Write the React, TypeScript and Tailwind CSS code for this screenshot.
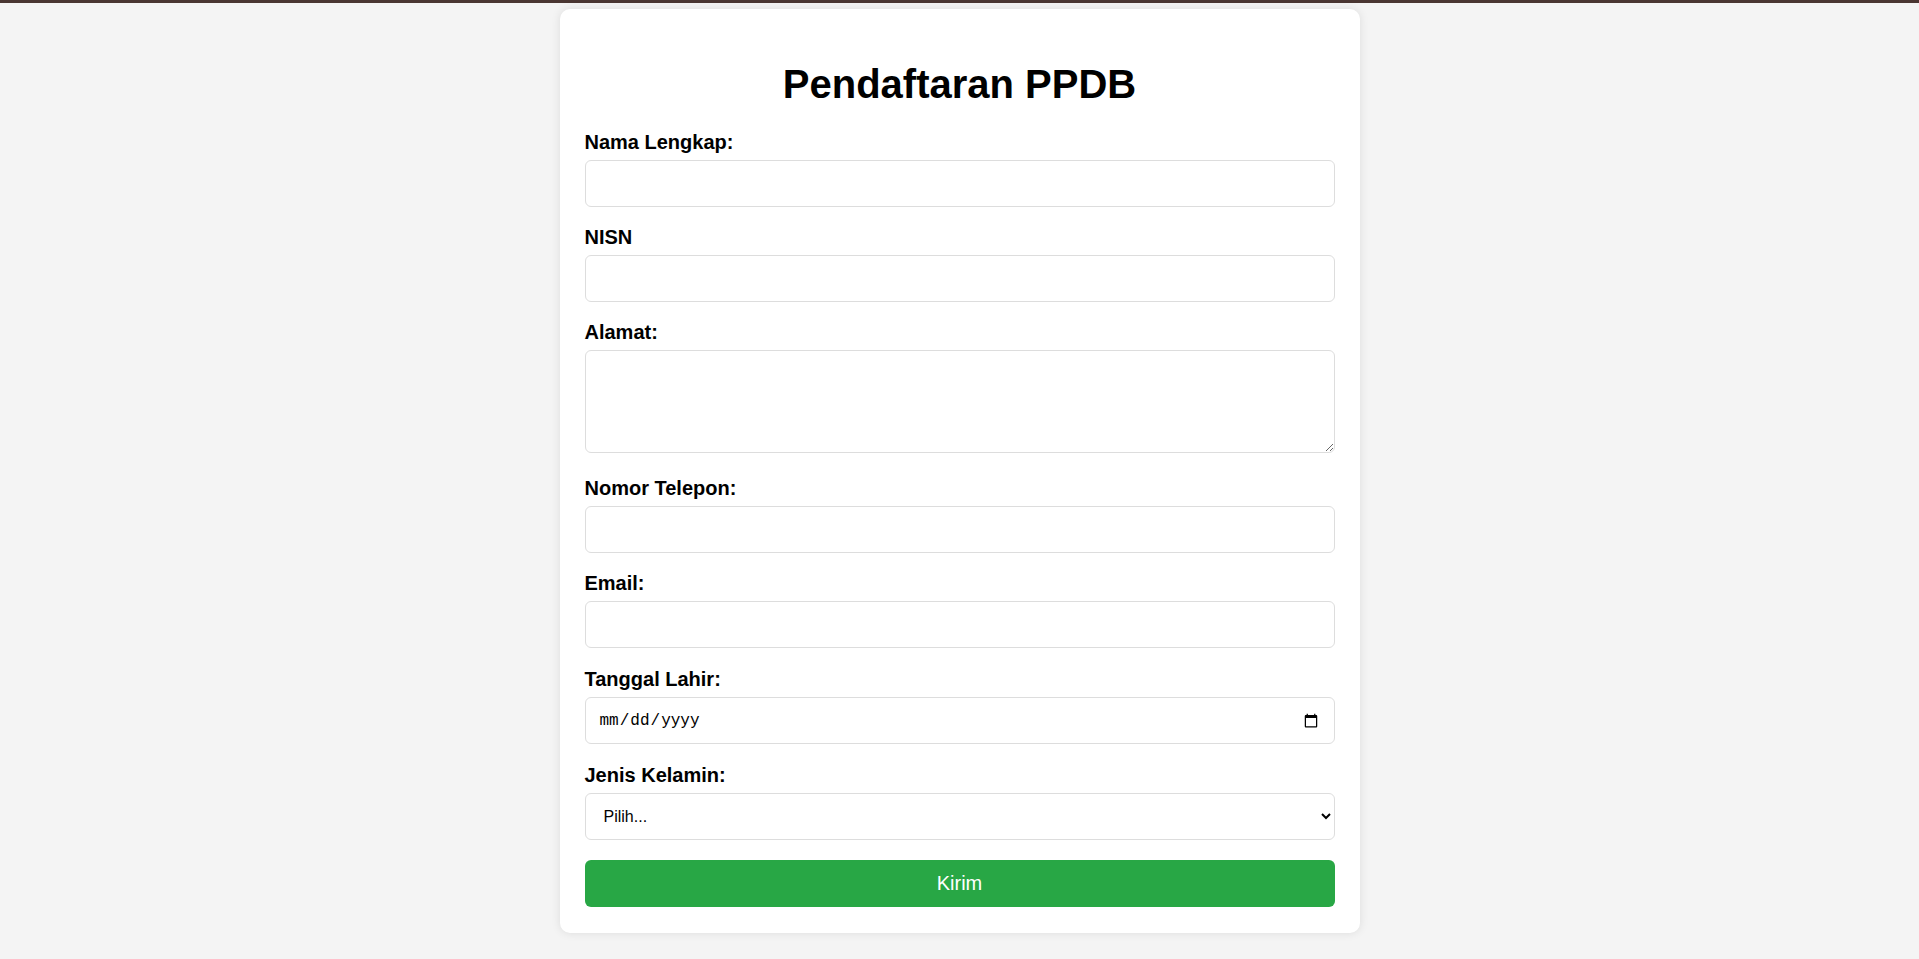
import React from "react";

const labelCls =
  "block text-[20px] leading-[23px] font-bold text-black mb-[6px]";
const inputCls =
  "block w-full h-[47px] border border-[#dddddd] rounded-[6px] bg-white px-[12px] text-[16px] text-black outline-none mb-[19px]";

export default function App() {
  return (
    <div className="min-h-[959px] bg-[#f4f4f4] font-['Liberation_Sans',Arial,sans-serif]">
      <div className="h-[3px] bg-[#4a3632]" />
      <div className="pt-[6px] pb-[26px]">
        <div className="mx-auto w-[800px] bg-white rounded-[10px] shadow-[0_0_10px_rgba(0,0,0,0.1)] px-[25px] pt-[25px] pb-[26px]">
          <h1 className="text-center text-[40px] leading-[46px] font-bold text-black mt-[27px] mb-[24px]">
            Pendaftaran PPDB
          </h1>
          <form onSubmit={(e) => e.preventDefault()}>
            <label className={labelCls}>Nama Lengkap:</label>
            <input type="text" className={inputCls} />

            <label className={labelCls}>NISN</label>
            <input type="text" className={inputCls} />

            <label className={labelCls}>Alamat:</label>
            <textarea className="block w-full h-[103px] border border-[#dddddd] rounded-[6px] bg-white px-[12px] py-[10px] text-[16px] text-black outline-none mb-[24px] resize-y" />

            <label className={labelCls}>Nomor Telepon:</label>
            <input type="tel" className={inputCls} />

            <label className={labelCls}>Email:</label>
            <input
              type="email"
              className="block w-full h-[47px] border border-[#dddddd] rounded-[6px] bg-white px-[12px] text-[16px] text-black outline-none mb-[20px]"
            />

            <label className={labelCls}>Tanggal Lahir:</label>
            <input
              type="date"
              className="block w-full h-[47px] border border-[#dddddd] rounded-[6px] bg-white pl-[13px] pr-[13px] text-[16px] text-black outline-none mb-[20px] font-['Liberation_Mono','DejaVu_Sans_Mono',monospace]"
            />

            <label className={labelCls}>Jenis Kelamin:</label>
            <select
              defaultValue=""
              className="block w-full h-[47px] border border-[#dddddd] rounded-[6px] bg-white pl-[14px] pr-[8px] text-[16px] text-black outline-none mb-[20px]"
            >
              <option value="">Pilih...</option>
              <option value="L">Laki-laki</option>
              <option value="P">Perempuan</option>
            </select>

            <button
              type="submit"
              className="block w-full h-[47px] rounded-[6px] bg-[#28a745] text-white text-[20px] leading-[23px]"
            >
              Kirim
            </button>
          </form>
        </div>
      </div>
    </div>
  );
}
